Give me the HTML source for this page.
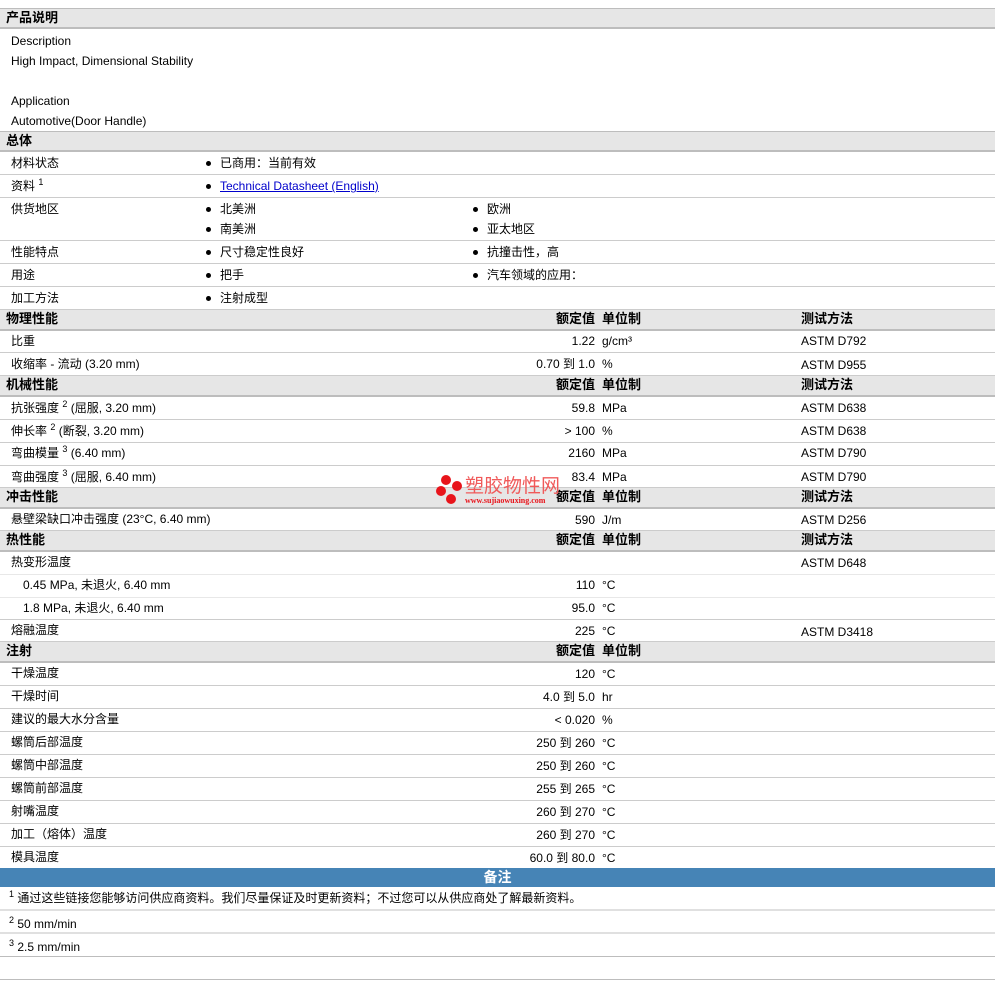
<!DOCTYPE html>
<html><head><meta charset="utf-8"><style>
*{margin:0;padding:0;box-sizing:border-box}
body{width:995px;height:981px;background:#fff;position:relative;overflow:hidden;font-family:"Liberation Sans","Noto Sans CJK SC",sans-serif;font-size:12px;line-height:16px;color:#000}
.r{position:absolute;left:0;width:995px;border-bottom:1px solid #ccc}
.s{border-bottom:1px solid #e8e8e8}
.h{background:#e6e6e6;border-bottom:2px solid #bdbdbd;font-weight:bold;font-size:13px}
.h span{top:1px!important}
.t{position:absolute;white-space:nowrap;line-height:16px}
.v{position:absolute;right:400px;text-align:right;white-space:nowrap;line-height:16px}
.b{position:absolute;white-space:nowrap;line-height:16px}
.b:before{content:"";position:absolute;left:-14px;top:6px;width:5px;height:5px;border-radius:50%;background:#000}
sup{font-size:9px;line-height:0;vertical-align:5px}
a{color:#00c;text-decoration:underline}
</style></head><body>
<div style="position:absolute;top:8px;left:0;width:995px;border-top:1px solid #bdbdbd"></div>
<div class="r h" style="top:9px;height:20px"><span class="t" style="left:6px;top:1px">产品说明</span></div>
<div class="t" style="left:11px;top:33px">Description</div>
<div class="t" style="left:11px;top:53px">High Impact, Dimensional Stability</div>
<div class="t" style="left:11px;top:93px">Application</div>
<div class="t" style="left:11px;top:113px">Automotive(Door Handle)</div>
<div class="r h" style="top:131px;height:21px;border-top:1px solid #bdbdbd"><span class="t" style="left:6px">总体</span></div>

<div class="r" style="top:152px;height:23px"><span class="t" style="left:11px;top:3px">材料状态</span><span class="b" style="left:220px;top:3px">已商用：当前有效</span></div>
<div class="r" style="top:175px;height:23px"><span class="t" style="left:11px;top:3px">资料 <sup>1</sup></span><span class="b" style="left:220px;top:3px"><a>Technical Datasheet (English)</a></span></div>
<div class="r" style="top:198px;height:43px"><span class="t" style="left:11px;top:3px">供货地区</span><span class="b" style="left:220px;top:3px">北美洲</span><span class="b" style="left:487px;top:3px">欧洲</span><span class="b" style="left:220px;top:23px">南美洲</span><span class="b" style="left:487px;top:23px">亚太地区</span></div>
<div class="r" style="top:241px;height:23px"><span class="t" style="left:11px;top:3px">性能特点</span><span class="b" style="left:220px;top:3px">尺寸稳定性良好</span><span class="b" style="left:487px;top:3px">抗撞击性，高</span></div>
<div class="r" style="top:264px;height:23px"><span class="t" style="left:11px;top:3px">用途</span><span class="b" style="left:220px;top:3px">把手</span><span class="b" style="left:487px;top:3px">汽车领域的应用：</span></div>
<div class="r" style="top:287px;height:23px"><span class="t" style="left:11px;top:3px">加工方法</span><span class="b" style="left:220px;top:3px">注射成型</span></div>

<div class="r h" style="top:310px;height:21px"><span class="t" style="left:6px">物理性能</span><span class="v">额定值</span><span class="t" style="left:602px">单位制</span><span class="t" style="left:801px">测试方法</span></div>
<div class="r" style="top:331px;height:22px"><span class="t" style="left:11px;top:2px">比重</span><span class="v" style="top:2px">1.22</span><span class="t" style="left:602px;top:2px">g/cm³</span><span class="t" style="left:801px;top:2px">ASTM D792</span></div>
<div class="r" style="top:353px;height:23px"><span class="t" style="left:11px;top:3px">收缩率 - 流动 (3.20 mm)</span><span class="v" style="top:3px">0.70 到 1.0</span><span class="t" style="left:602px;top:3px">%</span><span class="t" style="left:801px;top:4px">ASTM D955</span></div>

<div class="r h" style="top:376px;height:21px"><span class="t" style="left:6px">机械性能</span><span class="v">额定值</span><span class="t" style="left:602px">单位制</span><span class="t" style="left:801px">测试方法</span></div>
<div class="r" style="top:397px;height:23px"><span class="t" style="left:11px;top:3px">抗张强度 <sup>2</sup> (屈服, 3.20 mm)</span><span class="v" style="top:3px">59.8</span><span class="t" style="left:602px;top:3px">MPa</span><span class="t" style="left:801px;top:3px">ASTM D638</span></div>
<div class="r" style="top:420px;height:23px"><span class="t" style="left:11px;top:3px">伸长率 <sup>2</sup> (断裂, 3.20 mm)</span><span class="v" style="top:3px">&gt; 100</span><span class="t" style="left:602px;top:3px">%</span><span class="t" style="left:801px;top:3px">ASTM D638</span></div>
<div class="r" style="top:443px;height:23px"><span class="t" style="left:11px;top:2px">弯曲模量 <sup>3</sup> (6.40 mm)</span><span class="v" style="top:2px">2160</span><span class="t" style="left:602px;top:2px">MPa</span><span class="t" style="left:801px;top:2px">ASTM D790</span></div>
<div class="r" style="top:466px;height:22px"><span class="t" style="left:11px;top:3px">弯曲强度 <sup>3</sup> (屈服, 6.40 mm)</span><span class="v" style="top:3px">83.4</span><span class="t" style="left:602px;top:3px">MPa</span><span class="t" style="left:801px;top:3px">ASTM D790</span></div>

<div class="r h" style="top:488px;height:21px"><span class="t" style="left:6px">冲击性能</span><span class="v">额定值</span><span class="t" style="left:602px">单位制</span><span class="t" style="left:801px">测试方法</span></div>
<div class="r" style="top:509px;height:22px"><span class="t" style="left:11px;top:2px">悬壁梁缺口冲击强度 (23°C, 6.40 mm)</span><span class="v" style="top:3px">590</span><span class="t" style="left:602px;top:3px">J/m</span><span class="t" style="left:801px;top:3px">ASTM D256</span></div>

<div class="r h" style="top:531px;height:21px"><span class="t" style="left:6px">热性能</span><span class="v">额定值</span><span class="t" style="left:602px">单位制</span><span class="t" style="left:801px">测试方法</span></div>
<div class="r s" style="top:552px;height:23px"><span class="t" style="left:11px;top:2px">热变形温度</span><span class="t" style="left:801px;top:3px">ASTM D648</span></div>
<div class="r s" style="top:575px;height:23px"><span class="t" style="left:23px;top:2px">0.45 MPa, 未退火, 6.40 mm</span><span class="v" style="top:2px">110</span><span class="t" style="left:602px;top:2px">°C</span></div>
<div class="r" style="top:598px;height:22px"><span class="t" style="left:23px;top:2px">1.8 MPa, 未退火, 6.40 mm</span><span class="v" style="top:2px">95.0</span><span class="t" style="left:602px;top:2px">°C</span></div>
<div class="r" style="top:620px;height:22px"><span class="t" style="left:11px;top:2px">熔融温度</span><span class="v" style="top:3px">225</span><span class="t" style="left:602px;top:3px">°C</span><span class="t" style="left:801px;top:4px">ASTM D3418</span></div>

<div class="r h" style="top:642px;height:21px"><span class="t" style="left:6px">注射</span><span class="v">额定值</span><span class="t" style="left:602px">单位制</span></div>
<div class="r" style="top:663px;height:23px"><span class="t" style="left:11px;top:2px">干燥温度</span><span class="v" style="top:3px">120</span><span class="t" style="left:602px;top:3px">°C</span></div>
<div class="r" style="top:686px;height:23px"><span class="t" style="left:11px;top:2px">干燥时间</span><span class="v" style="top:3px">4.0 到 5.0</span><span class="t" style="left:602px;top:3px">hr</span></div>
<div class="r" style="top:709px;height:23px"><span class="t" style="left:11px;top:2px">建议的最大水分含量</span><span class="v" style="top:3px">&lt; 0.020</span><span class="t" style="left:602px;top:3px">%</span></div>
<div class="r" style="top:732px;height:23px"><span class="t" style="left:11px;top:2px">螺筒后部温度</span><span class="v" style="top:3px">250 到 260</span><span class="t" style="left:602px;top:3px">°C</span></div>
<div class="r" style="top:755px;height:23px"><span class="t" style="left:11px;top:2px">螺筒中部温度</span><span class="v" style="top:3px">250 到 260</span><span class="t" style="left:602px;top:3px">°C</span></div>
<div class="r" style="top:778px;height:23px"><span class="t" style="left:11px;top:2px">螺筒前部温度</span><span class="v" style="top:3px">255 到 265</span><span class="t" style="left:602px;top:3px">°C</span></div>
<div class="r" style="top:801px;height:23px"><span class="t" style="left:11px;top:2px">射嘴温度</span><span class="v" style="top:3px">260 到 270</span><span class="t" style="left:602px;top:3px">°C</span></div>
<div class="r" style="top:824px;height:23px"><span class="t" style="left:11px;top:2px">加工（熔体）温度</span><span class="v" style="top:3px">260 到 270</span><span class="t" style="left:602px;top:3px">°C</span></div>
<div class="r" style="top:847px;height:22px;border:none"><span class="t" style="left:11px;top:2px">模具温度</span><span class="v" style="top:3px">60.0 到 80.0</span><span class="t" style="left:602px;top:3px">°C</span></div>

<div style="position:absolute;top:868px;left:0;width:995px;height:19px;background:#4684b6;color:#fff;font-weight:bold;font-size:14px;text-align:center;line-height:18px">备注</div>
<div class="r s" style="top:887px;height:24px;border-bottom:2px solid #e0e0e0"><span class="t" style="left:9px;top:3px"><sup>1</sup> 通过这些链接您能够访问供应商资料。我们尽量保证及时更新资料；不过您可以从供应商处了解最新资料。</span></div>
<div class="r s" style="top:911px;height:23px;border-bottom:2px solid #e0e0e0"><span class="t" style="left:9px;top:5px"><sup>2</sup> 50 mm/min</span></div>
<div class="r" style="top:934px;height:23px;border-bottom:1px solid #bdbdbd"><span class="t" style="left:9px;top:5px"><sup>3</sup> 2.5 mm/min</span></div>
<div style="position:absolute;top:979px;left:0;width:995px;border-top:1px solid #bdbdbd"></div>

<div style="position:absolute;left:434px;top:474px;width:130px;height:36px">
<div style="position:absolute;left:7px;top:1px;width:10px;height:10px;border-radius:50%;background:#e8141b"></div>
<div style="position:absolute;left:18px;top:7px;width:10px;height:10px;border-radius:50%;background:#e8141b"></div>
<div style="position:absolute;left:2px;top:12px;width:10px;height:10px;border-radius:50%;background:#e8141b"></div>
<div style="position:absolute;left:12px;top:20px;width:10px;height:10px;border-radius:50%;background:#e8141b"></div>
<div style="position:absolute;left:31px;top:0px;color:#f05a5a;font-size:19px;line-height:22px;white-space:nowrap;font-family:'Noto Sans CJK SC',sans-serif">塑胶物性网</div>
<div style="position:absolute;left:31px;top:22px;color:#e8141b;font-size:8px;line-height:10px;white-space:nowrap;font-family:'Liberation Serif',serif;font-weight:bold">www.sujiaowuxing.com</div>
</div>
</body></html>
